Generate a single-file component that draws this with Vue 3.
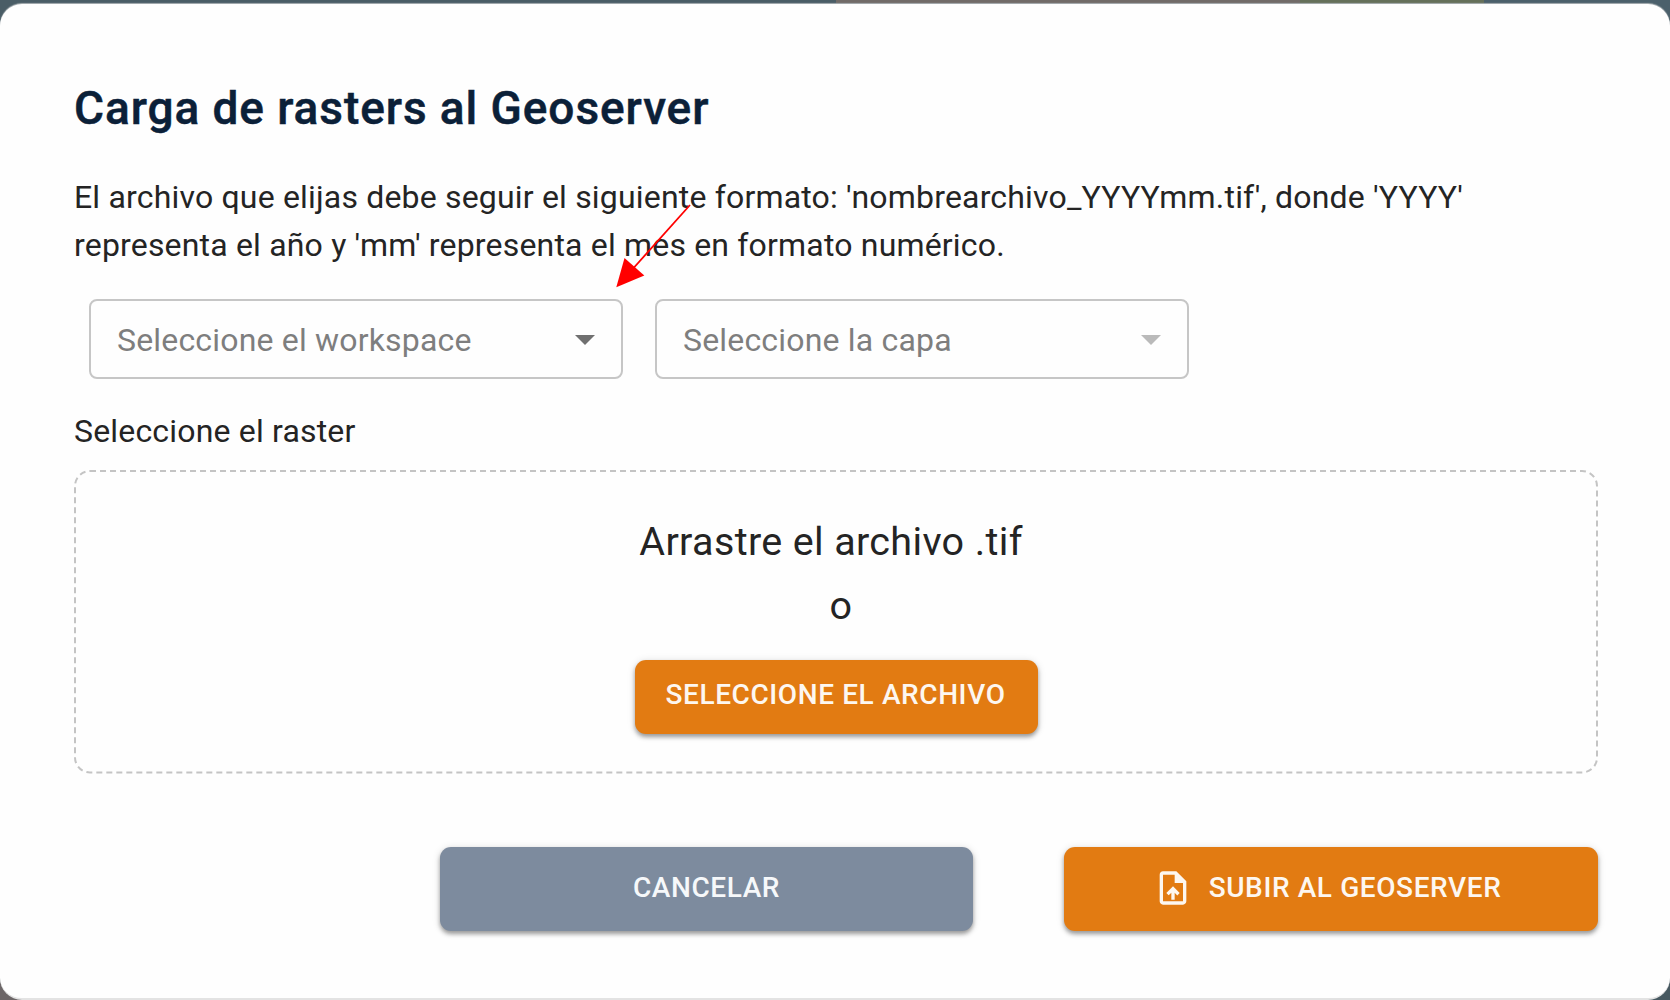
<script setup>
const selects = [
  { label: 'Seleccione el workspace', disabled: false },
  { label: 'Seleccione la capa', disabled: true },
]
</script>

<template>
  <div class="backdrop">
    <main class="dialog">
      <h1 class="title">Carga de rasters al Geoserver</h1>
      <p class="intro">
        <span class="line">El archivo que elijas debe seguir el siguiente formato: 'nombrearchivo_YYYYmm.tif', donde 'YYYY'</span>
        <span class="line">representa el año y 'mm' representa el mes en formato numérico.</span>
      </p>
      <div class="selects">
        <div v-for="s in selects" :key="s.label" class="select" :class="{ disabled: s.disabled }">
          <span>{{ s.label }}</span>
          <svg class="caret" width="20" height="10" viewBox="0 0 20 10"><path d="M0 0h20L10 10z" /></svg>
        </div>
      </div>
      <p class="label">Seleccione el raster</p>
      <section class="drop">
        <svg class="outline" width="1524" height="304">
          <rect x="1" y="1" width="1522" height="301.5" rx="15" />
        </svg>
        <p class="hint">Arrastre el archivo .tif</p>
        <p class="hint or">o</p>
        <button class="btn pick">SELECCIONE EL ARCHIVO</button>
      </section>
      <footer class="actions">
        <button class="btn cancel">CANCELAR</button>
        <button class="btn upload">
          <svg class="icon" width="40" height="40" viewBox="0 0 24 24">
            <path d="M14 2H6c-1.1 0-1.99.9-1.99 2L4 20c0 1.1.89 2 1.99 2H18c1.1 0 2-.9 2-2V8l-6-6zm4 18H6V4h7v5h5v11zM8 15.01l1.41 1.41L11 14.84V19h2v-4.16l1.59 1.59L16 15.01 12.01 11 8 15.01z" />
          </svg>
          <span>SUBIR AL GEOSERVER</span>
        </button>
      </footer>
    </main>
    <svg class="pointer" width="80" height="90" viewBox="612 202 80 90">
      <path d="M690 205L630 272" stroke="#f00" stroke-width="1.8" />
      <path d="M616.3 287.2L624.5 258L644.3 275.5z" fill="#f00" />
    </svg>
  </div>
</template>

<style>
body { margin: 0; }
</style>

<style scoped>
.backdrop {
  position: relative;
  box-sizing: border-box;
  width: 1670px;
  height: 1000px;
  padding-top: 4px;
  overflow: hidden;
  font-family: Roboto, "Liberation Sans", sans-serif;
  background:
    linear-gradient(90deg, #4a5d66 0 836px, #716b68 836px 1300px, #65705a 1300px 1484px, #4b606b 1484px) top / 100% 50% no-repeat,
    linear-gradient(90deg, #6c6667 0 50%, #465860 50%) bottom / 100% 50% no-repeat;
}
.dialog {
  box-sizing: border-box;
  display: flex;
  flex-direction: column;
  height: 996px;
  padding: 74px 72px 0 74px;
  border-bottom: 2px solid #e3e3e3;
  border-radius: 22px;
  background: #fefefe;
  box-shadow: 0 -1px 1px #aab1b4;
}
h1, p { margin: 0; white-space: nowrap; }
.title {
  font-size: 46px;
  line-height: 60px;
  font-weight: 500;
  letter-spacing: 0.92px;
  color: #0b2038;
  -webkit-text-stroke: 0.5px #0b2038;
}
.intro, .label {
  font-size: 32px;
  line-height: 48px;
  letter-spacing: 0.18px;
  color: #242424;
}
.intro { margin-top: 35px; }
.line { display: block; }
.selects { display: flex; gap: 32px; margin: 30px 0 28px 15px; }
.select {
  box-sizing: border-box;
  display: flex;
  align-items: center;
  justify-content: space-between;
  width: 534px;
  height: 80px;
  padding: 2px 26px 0 26px;
  border: 2px solid #c6c6c6;
  border-radius: 8px;
  font-size: 32px;
  letter-spacing: 0.18px;
  color: #7e7e7e;
}
.caret { fill: #707070; }
.disabled .caret { fill: #bababa; }
.drop {
  position: relative;
  box-sizing: border-box;
  display: flex;
  flex-direction: column;
  align-items: center;
  width: 1524px;
  height: 304px;
  margin-top: 15px;
  padding-top: 40px;
}
.outline { position: absolute; inset: 0; }
.outline rect { fill: none; stroke: #c4c4c4; stroke-width: 2; stroke-dasharray: 6 4; }
.hint {
  font-size: 39.5px;
  line-height: 64px;
  letter-spacing: 0.35px;
  color: #242424;
  padding-right: 10px;
}
.hint.or { padding: 0 0 0 10px; }
.btn {
  box-sizing: border-box;
  display: flex;
  align-items: center;
  justify-content: center;
  padding: 0 0 4px;
  border: 0;
  border-radius: 11px;
  font-family: inherit;
  font-size: 28px;
  font-weight: 500;
  letter-spacing: 0.6px;
  white-space: nowrap;
  color: #fdf7f0;
  background: #e27b12;
  box-shadow: 0 3px 4px rgba(0, 0, 0, 0.35), 0 1px 8px rgba(0, 0, 0, 0.12);
}
.pick { width: 403px; height: 74px; margin: 22px 0 0 1px; padding: 0 2px 5px 0; }
.actions { display: flex; justify-content: flex-end; gap: 91px; margin-top: 73px; }
.cancel { width: 533px; height: 84px; color: #f6f8fa; background: #7d8b9e; }
.upload { width: 534px; height: 84px; padding-right: 8px; }
.icon { position: relative; top: 1px; margin-right: 16px; fill: currentColor; }
.pointer { position: absolute; left: 612px; top: 202px; }
</style>
